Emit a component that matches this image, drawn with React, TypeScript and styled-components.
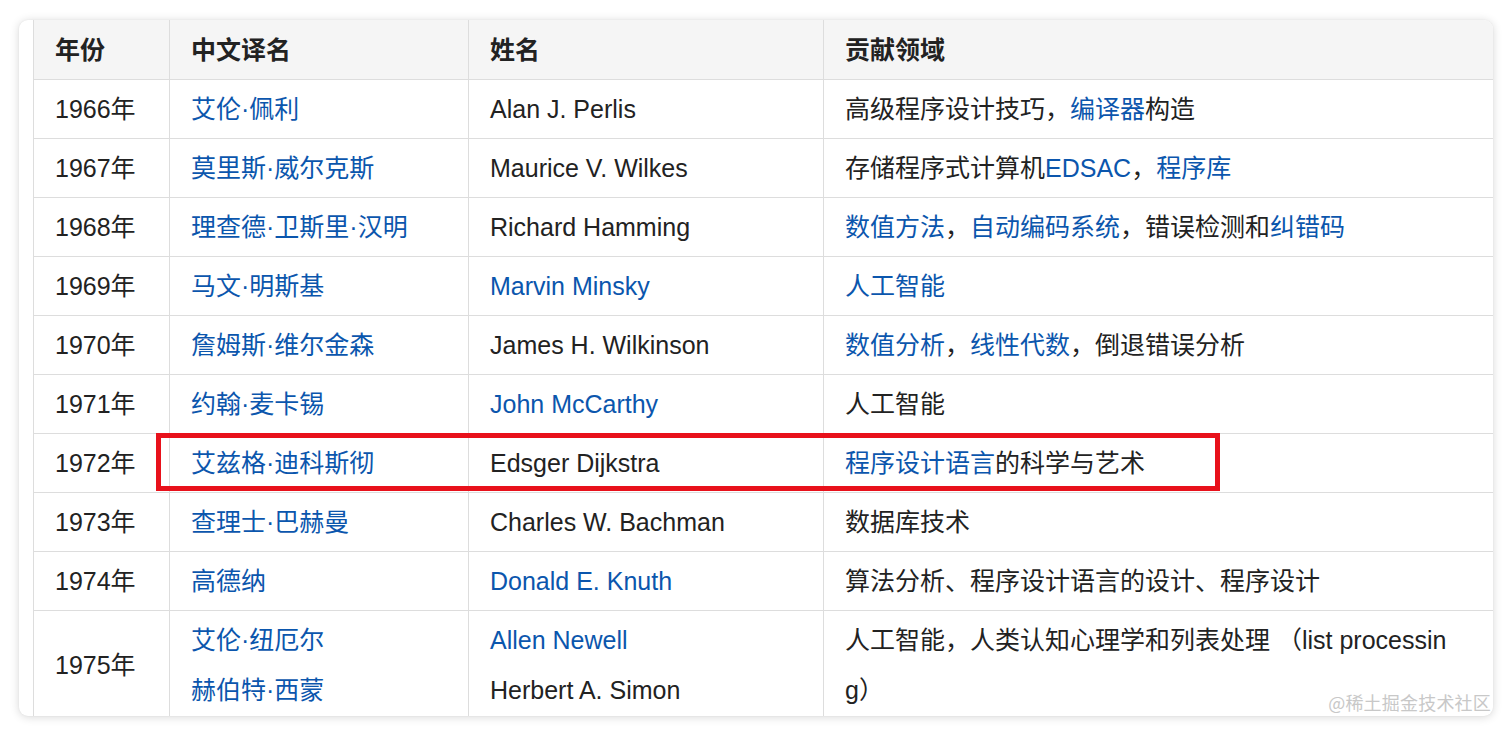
import React from "react";
import styled, { createGlobalStyle } from "styled-components";

const GlobalStyle = createGlobalStyle`
  html, body { margin: 0; padding: 0; background: #ffffff; }
  body { font-family: "Liberation Sans", "Noto Sans CJK SC", sans-serif; }
`;

const Page = styled.div`
  padding: 20px 0 0 19px;
  height: 735px;
  box-sizing: border-box;
`;

const Card = styled.div`
  position: relative;
  width: 1474px;
  height: 696px;
  box-sizing: border-box;
  padding-left: 14px;
  background: #ffffff;
  border-radius: 9px;
  overflow: hidden;
  box-shadow: 0 1px 10px rgba(0, 0, 0, 0.16), 0 0 2px rgba(0, 0, 0, 0.06);
`;

const Table = styled.table`
  border-collapse: collapse;
  table-layout: fixed;
  width: 1470px;
  font-size: 25px;
  line-height: 50px;
  color: #222222;
`;

const HeadCell = styled.th`
  background: #f5f5f5;
  font-weight: 700;
  text-align: left;
  padding: 5px 21px 4px;
  border-left: 1px solid #dddddd;
  border-right: 1px solid #dddddd;
  border-bottom: 1px solid #dddddd;
  color: #222222;
`;

const Cell = styled.td<{ $wide?: boolean }>`
  padding: 4px ${(p) => (p.$wide ? "46px" : "21px")} 4px 21px;
  border: 1px solid #dddddd;
  vertical-align: middle;
  word-break: ${(p) => (p.$wide ? "break-all" : "normal")};
`;

const Line = styled.div``;

const Link = styled.span`
  color: #0b56ad;
`;

const Highlight = styled.div`
  position: absolute;
  left: 137px;
  top: 413px;
  width: 1064px;
  height: 58px;
  box-sizing: border-box;
  border: 5px solid #e8111b;
  pointer-events: none;
`;

const Watermark = styled.div`
  position: absolute;
  right: 2px;
  bottom: 3px;
  font-size: 18px;
  line-height: 22px;
  color: #c8c8c8;
  letter-spacing: 0.2px;
  font-family: "Noto Sans CJK SC", sans-serif;
`;

type Part = { t: string; link?: boolean };
type Row = {
  year: string;
  cn: string[];
  en: Part[][];
  area: Part[];
};

const L = (t: string): Part => ({ t, link: true });
const T = (t: string): Part => ({ t });

const rows: Row[] = [
  { year: "1966年", cn: ["艾伦·佩利"], en: [[T("Alan J. Perlis")]], area: [T("高级程序设计技巧，"), L("编译器"), T("构造")] },
  { year: "1967年", cn: ["莫里斯·威尔克斯"], en: [[T("Maurice V. Wilkes")]], area: [T("存储程序式计算机"), L("EDSAC"), T("，"), L("程序库")] },
  { year: "1968年", cn: ["理查德·卫斯里·汉明"], en: [[T("Richard Hamming")]], area: [L("数值方法"), T("，"), L("自动编码系统"), T("，错误检测和"), L("纠错码")] },
  { year: "1969年", cn: ["马文·明斯基"], en: [[L("Marvin Minsky")]], area: [L("人工智能")] },
  { year: "1970年", cn: ["詹姆斯·维尔金森"], en: [[T("James H. Wilkinson")]], area: [L("数值分析"), T("，"), L("线性代数"), T("，倒退错误分析")] },
  { year: "1971年", cn: ["约翰·麦卡锡"], en: [[L("John McCarthy")]], area: [T("人工智能")] },
  { year: "1972年", cn: ["艾兹格·迪科斯彻"], en: [[T("Edsger Dijkstra")]], area: [L("程序设计语言"), T("的科学与艺术")] },
  { year: "1973年", cn: ["查理士·巴赫曼"], en: [[T("Charles W. Bachman")]], area: [T("数据库技术")] },
  { year: "1974年", cn: ["高德纳"], en: [[L("Donald E. Knuth")]], area: [T("算法分析、程序设计语言的设计、程序设计")] },
  {
    year: "1975年",
    cn: ["艾伦·纽厄尔", "赫伯特·西蒙"],
    en: [[L("Allen Newell")], [T("Herbert A. Simon")]],
    area: [T("人工智能，人类认知心理学和列表处理 （list processing）")],
  },
];

const renderParts = (parts: Part[]) =>
  parts.map((p, i) => (p.link ? <Link key={i}>{p.t}</Link> : <React.Fragment key={i}>{p.t}</React.Fragment>));

export default function App() {
  return (
    <>
      <GlobalStyle />
      <Page>
        <Card>
          <Table>
            <colgroup>
              <col style={{ width: 136 }} />
              <col style={{ width: 299 }} />
              <col style={{ width: 355 }} />
              <col style={{ width: 680 }} />
            </colgroup>
            <thead>
              <tr>
                <HeadCell>年份</HeadCell>
                <HeadCell>中文译名</HeadCell>
                <HeadCell>姓名</HeadCell>
                <HeadCell>贡献领域</HeadCell>
              </tr>
            </thead>
            <tbody>
              {rows.map((r) => (
                <tr key={r.year}>
                  <Cell>{r.year}</Cell>
                  <Cell>
                    {r.cn.map((c) => (
                      <Line key={c}>
                        <Link>{c}</Link>
                      </Line>
                    ))}
                  </Cell>
                  <Cell>
                    {r.en.map((e, i) => (
                      <Line key={i}>{renderParts(e)}</Line>
                    ))}
                  </Cell>
                  <Cell $wide>{renderParts(r.area)}</Cell>
                </tr>
              ))}
            </tbody>
          </Table>
          <Highlight />
          <Watermark>@稀土掘金技术社区</Watermark>
        </Card>
      </Page>
    </>
  );
}
